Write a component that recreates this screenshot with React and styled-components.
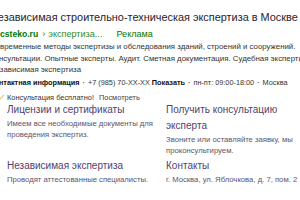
import styled, { createGlobalStyle } from "styled-components";

const GlobalStyle = createGlobalStyle`
  html, body {
    margin: 0;
    padding: 0;
    background: #fff;
    overflow: hidden;
  }
  body {
    font-family: "Liberation Sans", Arial, sans-serif;
  }
`;

const textLines = [
  "Современные методы экспертизы и обследования зданий, строений и сооружений.",
  "Консультации. Опытные эксперты. Аудит. Сметная документация. Судебная экспертиза.",
  "Независимая экспертиза",
];

const sitelinks = [
  {
    title: "Лицензии и сертификаты",
    text: "Имеем все необходимые документы для проведения экспертиз.",
  },
  {
    title: "Получить консультацию эксперта",
    text: "Звоните или оставляйте заявку, мы проконсультируем.",
  },
  {
    title: "Независимая экспертиза",
    text: "Проводят аттестованные специалисты.",
  },
  {
    title: "Контакты",
    text: "г. Москва, ул. Яблочкова, д. 7, пом. 2",
  },
];

const App = () => {
  return (
    <>
      <GlobalStyle />
      <Viewport>
        <Ad>
          <Title>Независимая строительно-техническая экспертиза в Москве</Title>
          <Path>
            <Domain>csteko.ru</Domain>
            <Crumb>›</Crumb>
            <span>экспертиза...</span>
            <Label>Реклама</Label>
          </Path>
          <Text>
            {textLines.map((line) => (
              <TextLine key={line}>{line}</TextLine>
            ))}
          </Text>
          <Contacts>
            <Strong>Контактная информация</Strong>
            <Dot>·</Dot>
            <span>+7 (985) 70-XX-XX</span> <Strong>Показать</Strong>
            <Dot>·</Dot>
            <span>пн-пт: 09:00-18:00</span>
            <Dot>·</Dot>
            <span>Москва</span>
          </Contacts>
          <Promo>
            <PromoIcon viewBox="0 0 10 10">
              <path d="M1 8.5 L6.5 3 L7.2 3.7 L1.7 9.2 Z" fill="#d9a030" />
              <path d="M7.3 0.5 L7.8 2 L9.3 2.4 L7.8 2.8 L7.3 4.3 L6.8 2.8 L5.3 2.4 L6.8 2 Z" fill="#f0b43a" />
            </PromoIcon>
            <span>Консультация бесплатно!</span>
            <PromoLink>Посмотреть</PromoLink>
          </Promo>
          <Sitelinks>
            {sitelinks.map((s) => (
              <Sitelink key={s.title}>
                <SitelinkTitle>{s.title}</SitelinkTitle>
                <SitelinkText>{s.text}</SitelinkText>
              </Sitelink>
            ))}
          </Sitelinks>
        </Ad>
      </Viewport>
    </>
  );
};

export default App;

const Viewport = styled.div`
  width: 300px;
  height: 200px;
  overflow: hidden;
  position: relative;
`;

const Ad = styled.div`
  width: 340px;
  margin-left: -10px;
  padding-top: 10px;
  display: flex;
  flex-direction: column;
`;

const Title = styled.div`
  font-size: 10.9px;
  line-height: 14px;
  color: #2a2230;
  white-space: nowrap;
`;

const Path = styled.div`
  margin-top: 4px;
  margin-left: 10px;
  font-size: 9.1px;
  line-height: 12px;
  color: #2f8a2f;
  white-space: nowrap;
`;

const Domain = styled.b`
  font-weight: bold;
  font-size: 8.6px;
  color: #007700;
`;

const Crumb = styled.span`
  margin: 0 3px 0 4px;
`;

const Label = styled.span`
  margin-left: 14px;
  color: #007700;
`;

const Text = styled.div`
  margin-top: 1px;
  font-size: 7.85px;
  line-height: 11.7px;
  color: #333;
`;

const TextLine = styled.div`
  white-space: nowrap;
`;

const Contacts = styled.div`
  margin-top: 1px;
  font-size: 7.3px;
  line-height: 12px;
  color: #333;
  white-space: nowrap;
`;

const Strong = styled.span`
  color: #111;
  font-weight: bold;
`;

const Dot = styled.span`
  margin: 0 3px;
  color: #555;
  font-weight: bold;
`;

const Promo = styled.div`
  margin-top: 2.5px;
  margin-left: 8px;
  display: flex;
  align-items: center;
  gap: 2px;
  font-size: 7.4px;
  line-height: 11px;
  color: #333;
  white-space: nowrap;
`;

const PromoIcon = styled.svg`
  width: 7px;
  height: 7px;
`;

const PromoLink = styled.span`
  margin-left: 3px;
  color: #444;
`;

const Sitelinks = styled.div`
  margin-top: -1px;
  margin-left: 17px;
  display: grid;
  grid-template-columns: 159px 140px;
  row-gap: 1px;
`;

const Sitelink = styled.div`
  display: flex;
  flex-direction: column;
  padding-right: 6px;
`;

const SitelinkTitle = styled.div`
  font-size: 10px;
  line-height: 16px;
  color: #4f3f6e;
`;

const SitelinkText = styled.div`
  font-size: 7.7px;
  line-height: 11.7px;
  color: #5e5468;
`;
